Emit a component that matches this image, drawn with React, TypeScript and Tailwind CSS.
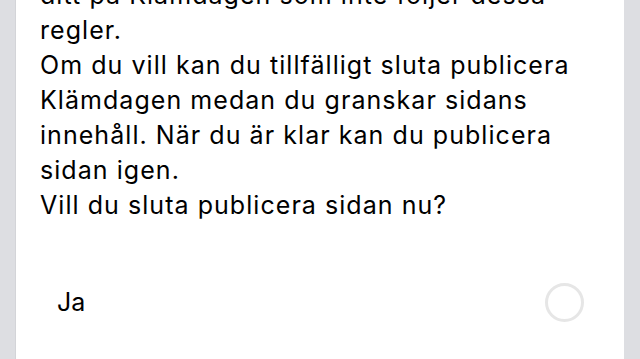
const lines = [
  'ditt på Klämdagen som inte följer dessa',
  'regler.',
  'Om du vill kan du tillfälligt sluta publicera',
  'Klämdagen medan du granskar sidans',
  'innehåll. När du är klar kan du publicera',
  'sidan igen.',
  'Vill du sluta publicera sidan nu?',
];

export default function App() {
  return (
    <div className="flex h-[359px] w-[640px] overflow-hidden bg-[#dddee2] font-['Inter',sans-serif] text-black">
      <div className="ml-[15px] flex w-[609px] flex-col border-l border-[#d3d4d8] bg-white">
        <div className="-mt-[22px] px-[24px] text-[25px] leading-[35px] tracking-[1.05px]">
          {lines.map((line) => (
            <div key={line} className="whitespace-nowrap">
              {line}
            </div>
          ))}
        </div>
        <div className="mt-[40px] flex h-[78px] items-center justify-between pl-[41px] pr-[40px]">
          <span className="text-[25px] leading-none">Ja</span>
          <span className="h-[39px] w-[39px] rounded-full border-[3px] border-[#e6e6e6]" />
        </div>
      </div>
    </div>
  );
}
